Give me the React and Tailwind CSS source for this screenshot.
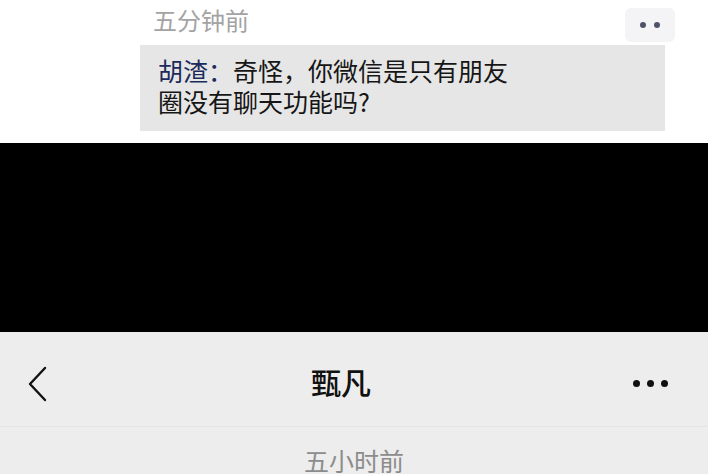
import React from 'react'

const cjk = { fontFamily: '"Noto Sans CJK SC", "Noto Sans", sans-serif' }

const App = () => {
    return (
        <div className="w-[708px] h-[474px] overflow-hidden bg-white flex flex-col" style={cjk}>
            {/* top chat fragment */}
            <div className="h-[143px] shrink-0 bg-white flex flex-col">
                <div className="flex items-start justify-between pl-[153px] pr-[33px] pt-[5px]">
                    <span className="text-[24px] leading-[30px] text-[#a3a3a3]">五分钟前</span>
                    <div className="mt-[3px] w-[50px] h-[34px] rounded-[6px] bg-[#f4f4f6] flex items-center justify-center gap-[8px]">
                        <span className="w-[6px] h-[6px] rounded-full bg-[#4f5369]" />
                        <span className="w-[6px] h-[6px] rounded-full bg-[#4f5369]" />
                    </div>
                </div>
                <div className="ml-[140px] mt-[3px] w-[525px] h-[86px] bg-[#e6e6e6] pl-[18px] pt-[10px]">
                    <p className="text-[25px] leading-[31px] text-[#161616]">
                        <span className="text-[#1d2a5c]">胡渣：</span>奇怪，你微信是只有朋友<br />圈没有聊天功能吗?
                    </p>
                </div>
            </div>

            {/* black band */}
            <div className="h-[189px] shrink-0 bg-black" />

            {/* nav bar */}
            <div className="flex-1 bg-[#ededed] flex flex-col">
                <div className="h-[95px] shrink-0 grid grid-cols-[1fr_auto_1fr] items-center pt-[9px] pl-[26px] pr-[40px] border-b border-[#e4e4e4]">
                    <svg width="24" height="36" viewBox="0 0 24 36" fill="none">
                        <path d="M19 2 L4 18 L19 34" stroke="#111" strokeWidth="2.4" strokeLinecap="round" strokeLinejoin="round" />
                    </svg>
                    <span className="text-[30px] leading-[36px] font-medium text-[#111] -ml-[12px] -mt-[6px]">甄凡</span>
                    <div className="flex items-center justify-end gap-[7px]">
                        <span className="w-[7px] h-[7px] rounded-full bg-[#111]" />
                        <span className="w-[7px] h-[7px] rounded-full bg-[#111]" />
                        <span className="w-[7px] h-[7px] rounded-full bg-[#111]" />
                    </div>
                </div>
                <div className="flex justify-center pt-[17px]">
                    <span className="text-[25px] leading-[32px] text-[#8c8c8c]">五小时前</span>
                </div>
            </div>
        </div>
    )
}

export default App
